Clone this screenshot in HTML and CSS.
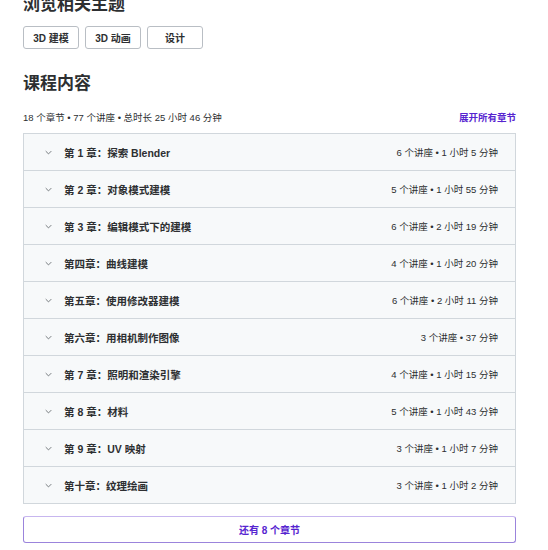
FILE: index.html
```html
<!DOCTYPE html>
<html lang="zh-CN">
<head>
    <meta charset="UTF-8">
    <meta name="viewport" content="width=device-width, initial-scale=1.0">
    <title>课程内容</title>
    <link rel="stylesheet" href="styles.css">
</head>
<body>
    <div class="page">
        <h2 class="topics-title">浏览相关主题</h2>
        <div class="tags">
            <button class="tag">3D 建模</button>
            <button class="tag">3D 动画</button>
            <button class="tag">设计</button>
        </div>

        <h2 class="section-title">课程内容</h2>

        <div class="summary">
            <span>18 个章节 • 77 个讲座 • 总时长 25 小时 46 分钟</span>
            <a class="expand" href="#">展开所有章节</a>
        </div>

        <div class="chapters">
            <div class="chapter">
                <svg class="chevron" viewBox="0 0 10 6"><path d="M1 1l4 4 4-4"/></svg>
                <span class="name">第 1 章：探索 Blender</span>
                <span class="meta">6 个讲座 • 1 小时 5 分钟</span>
            </div>
            <div class="chapter">
                <svg class="chevron" viewBox="0 0 10 6"><path d="M1 1l4 4 4-4"/></svg>
                <span class="name">第 2 章：对象模式建模</span>
                <span class="meta">5 个讲座 • 1 小时 55 分钟</span>
            </div>
            <div class="chapter">
                <svg class="chevron" viewBox="0 0 10 6"><path d="M1 1l4 4 4-4"/></svg>
                <span class="name">第 3 章：编辑模式下的建模</span>
                <span class="meta">6 个讲座 • 2 小时 19 分钟</span>
            </div>
            <div class="chapter">
                <svg class="chevron" viewBox="0 0 10 6"><path d="M1 1l4 4 4-4"/></svg>
                <span class="name">第四章：曲线建模</span>
                <span class="meta">4 个讲座 • 1 小时 20 分钟</span>
            </div>
            <div class="chapter">
                <svg class="chevron" viewBox="0 0 10 6"><path d="M1 1l4 4 4-4"/></svg>
                <span class="name">第五章：使用修改器建模</span>
                <span class="meta">6 个讲座 • 2 小时 11 分钟</span>
            </div>
            <div class="chapter">
                <svg class="chevron" viewBox="0 0 10 6"><path d="M1 1l4 4 4-4"/></svg>
                <span class="name">第六章：用相机制作图像</span>
                <span class="meta">3 个讲座 • 37 分钟</span>
            </div>
            <div class="chapter">
                <svg class="chevron" viewBox="0 0 10 6"><path d="M1 1l4 4 4-4"/></svg>
                <span class="name">第 7 章：照明和渲染引擎</span>
                <span class="meta">4 个讲座 • 1 小时 15 分钟</span>
            </div>
            <div class="chapter">
                <svg class="chevron" viewBox="0 0 10 6"><path d="M1 1l4 4 4-4"/></svg>
                <span class="name">第 8 章：材料</span>
                <span class="meta">5 个讲座 • 1 小时 43 分钟</span>
            </div>
            <div class="chapter">
                <svg class="chevron" viewBox="0 0 10 6"><path d="M1 1l4 4 4-4"/></svg>
                <span class="name">第 9 章：UV 映射</span>
                <span class="meta">3 个讲座 • 1 小时 7 分钟</span>
            </div>
            <div class="chapter">
                <svg class="chevron" viewBox="0 0 10 6"><path d="M1 1l4 4 4-4"/></svg>
                <span class="name">第十章：纹理绘画</span>
                <span class="meta">3 个讲座 • 1 小时 2 分钟</span>
            </div>
        </div>

        <button class="more">还有 8 个章节</button>
    </div>
</body>
</html>
```

FILE: styles.css
```css
body {
    margin: 0;
    font-family: "Liberation Sans", "Noto Sans CJK SC", sans-serif;
    color: #2d2f31;
    background: #fff;
    overflow: hidden;
}
.page {
    width: 493px;
    padding-left: 23px;
}
.topics-title {
    font-size: 17px;
    font-weight: 700;
    margin: -6px 0 0;
    line-height: 22px;
}
.tags {
    display: flex;
    gap: 6px;
    margin-top: 10px;
}
.tag {
    min-width: 56px;
    height: 23px;
    padding: 0 9px;
    border: 1px solid #b9bec4;
    border-radius: 3px;
    background: #fff;
    font-family: inherit;
    font-size: 10px;
    font-weight: 700;
    color: #2d2f31;
}
.section-title {
    font-size: 17px;
    font-weight: 700;
    margin: 24px 0 0;
    line-height: 22px;
}
.summary {
    display: flex;
    justify-content: space-between;
    align-items: center;
    margin-top: 16px;
    font-size: 9.5px;
    line-height: 14px;
}
.expand {
    color: #5624d0;
    font-weight: 700;
    text-decoration: none;
}
.chapters {
    margin-top: 8px;
    border: 1px solid #d1d7dc;
    border-bottom: none;
    background: #f7f9fa;
}
.chapter {
    display: flex;
    align-items: center;
    height: 36px;
    border-bottom: 1px solid #d1d7dc;
    padding: 0 17px 0 21px;
}
.chevron {
    width: 7px;
    height: 5px;
    fill: none;
    stroke: #6a6f73;
    stroke-width: 1.3;
    margin-right: 12px;
}
.name {
    flex: 1;
    font-size: 10.5px;
    font-weight: 700;
}
.meta {
    font-size: 9.5px;
}
.more {
    display: block;
    width: 100%;
    height: 27px;
    margin-top: 12px;
    border: 1px solid #9b84dc;
    border-top-color: #c7b6ef;
    border-radius: 3px;
    background: #fff;
    font-family: inherit;
    font-size: 10px;
    font-weight: 700;
    color: #5624d0;
}
```
